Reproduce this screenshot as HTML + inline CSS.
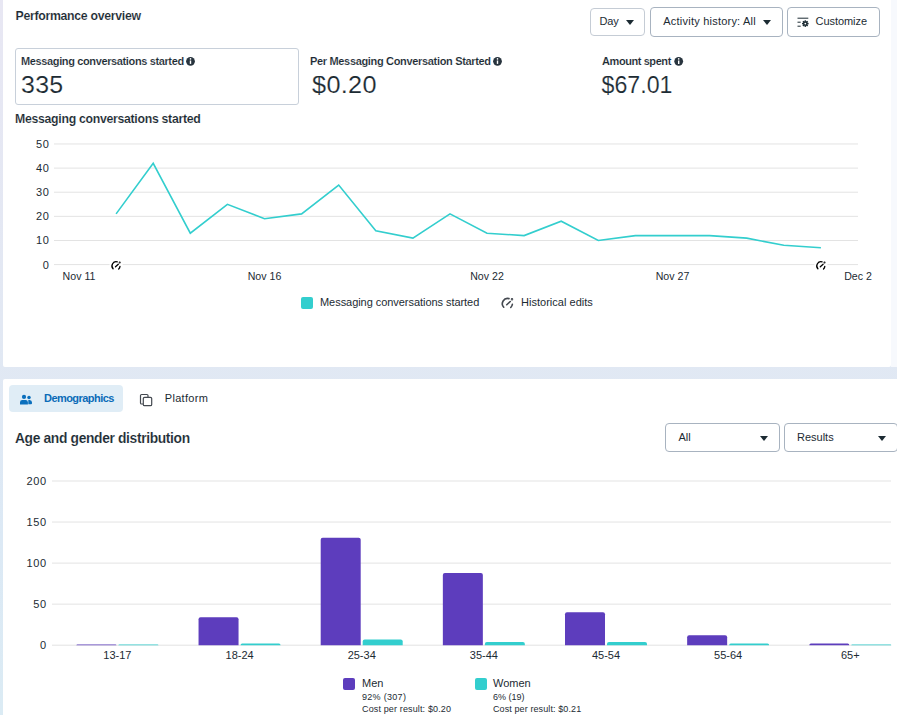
<!DOCTYPE html>
<html><head><meta charset="utf-8">
<style>
*{box-sizing:border-box;margin:0;padding:0}
html,body{width:897px;height:715px;overflow:hidden;background:linear-gradient(180deg,#e8e7f3 0%,#e2e8f3 45%,#dcE9f5 75%,#dbebf4 100%);font-family:"Liberation Sans",sans-serif;color:#1c2b33;position:relative}
.abs{position:absolute;white-space:nowrap}
#card1{position:absolute;left:3px;top:-10px;width:888px;height:377px;background:#fff;border-radius:0 0 2px 2px}
#rstrip{position:absolute;left:891px;top:0;width:6px;height:367px;background:#f7f9fd}
#card2{position:absolute;left:3px;top:379px;width:900px;height:400px;background:#fff;border-radius:2px 0 0 0}
.btn{position:absolute;border:1px solid #a8b3c0;border-radius:4px;background:#fff}
.tri{position:absolute;width:0;height:0;border-left:4.5px solid transparent;border-right:4.5px solid transparent;border-top:5px solid #1c2b33}
.lbl{font-size:11px;font-weight:bold;letter-spacing:-0.42px;-webkit-text-stroke:0.12px #fff}
.big{font-size:23.2px;letter-spacing:0.3px;color:#1c2b33;-webkit-text-stroke:0.15px #fff;transform-origin:0 0}
svg{position:absolute;left:0;top:0;z-index:5}
</style></head><body>
<div id="card1"></div>
<div id="rstrip"></div>
<div id="card2"></div>

<!-- header -->
<div class="abs" style="left:15.5px;top:8px;font-size:12.3px;font-weight:bold;letter-spacing:-0.3px;line-height:16px;-webkit-text-stroke:0.12px #fff">Performance overview</div>

<div class="btn" style="left:590px;top:8px;width:55px;height:28px;border-color:#c5ccd5"></div>
<div class="abs" style="left:599.5px;top:14px;font-size:11px;line-height:15px;letter-spacing:-0.1px">Day</div>
<div class="tri" style="left:626px;top:20px"></div>

<div class="btn" style="left:650px;top:7px;width:133px;height:30px"></div>
<div class="abs" style="left:663.3px;top:14px;font-size:11px;line-height:15px;letter-spacing:0.22px">Activity history: All</div>
<div class="tri" style="left:763px;top:20px"></div>

<div class="btn" style="left:787px;top:7px;width:93px;height:30px"></div>
<div class="abs" style="left:815.5px;top:14px;font-size:11px;line-height:15px;letter-spacing:-0.05px">Customize</div>

<!-- metric boxes -->
<div class="abs" style="left:15px;top:48px;width:284px;height:57px;border:1px solid #c8d0da;border-radius:3px"></div>
<div class="abs lbl" style="left:21px;top:54px;line-height:14px;letter-spacing:-0.37px">Messaging conversations started</div>
<div class="abs big" style="left:21px;top:72px;line-height:26px;transform:scaleX(1.075)">335</div>

<div class="abs lbl" style="left:310px;top:54px;line-height:14px;letter-spacing:-0.33px">Per Messaging Conversation Started</div>
<div class="abs big" style="left:311.5px;top:72px;line-height:26px;transform:scaleX(1.09)">$0.20</div>

<div class="abs lbl" style="left:602px;top:54px;line-height:14px">Amount spent</div>
<div class="abs big" style="left:601.5px;top:72px;line-height:26px;letter-spacing:0;transform:scaleX(1.0)">$67.01</div>

<div class="abs" style="left:15px;top:111px;font-size:12.3px;font-weight:bold;letter-spacing:-0.3px;line-height:16px;-webkit-text-stroke:0.12px #fff">Messaging conversations started</div>

<svg id="g" width="897" height="715" viewBox="0 0 897 715" font-family="Liberation Sans, sans-serif">
<line x1="54" y1="264.6" x2="858" y2="264.6" stroke="#e3e3e3" stroke-width="1"/>
<text x="49.6" y="268.6" text-anchor="end" font-size="11" fill="#1c2b33" letter-spacing="0.7">0</text>
<line x1="54" y1="240.47400000000002" x2="858" y2="240.47400000000002" stroke="#e3e3e3" stroke-width="1"/>
<text x="49.6" y="244.47400000000002" text-anchor="end" font-size="11" fill="#1c2b33" letter-spacing="0.7">10</text>
<line x1="54" y1="216.348" x2="858" y2="216.348" stroke="#e3e3e3" stroke-width="1"/>
<text x="49.6" y="220.348" text-anchor="end" font-size="11" fill="#1c2b33" letter-spacing="0.7">20</text>
<line x1="54" y1="192.22200000000004" x2="858" y2="192.22200000000004" stroke="#e3e3e3" stroke-width="1"/>
<text x="49.6" y="196.22200000000004" text-anchor="end" font-size="11" fill="#1c2b33" letter-spacing="0.7">30</text>
<line x1="54" y1="168.09600000000003" x2="858" y2="168.09600000000003" stroke="#e3e3e3" stroke-width="1"/>
<text x="49.6" y="172.09600000000003" text-anchor="end" font-size="11" fill="#1c2b33" letter-spacing="0.7">40</text>
<line x1="54" y1="143.97000000000003" x2="858" y2="143.97000000000003" stroke="#e3e3e3" stroke-width="1"/>
<text x="49.6" y="147.97000000000003" text-anchor="end" font-size="11" fill="#1c2b33" letter-spacing="0.7">50</text>
<text x="79.0" y="280" text-anchor="middle" font-size="10.6" fill="#1c2b33">Nov 11</text>
<text x="264.5" y="280" text-anchor="middle" font-size="10.6" fill="#1c2b33">Nov 16</text>
<text x="487.0" y="280" text-anchor="middle" font-size="10.6" fill="#1c2b33">Nov 22</text>
<text x="672.5" y="280" text-anchor="middle" font-size="10.6" fill="#1c2b33">Nov 27</text>
<text x="858.0" y="280" text-anchor="middle" font-size="10.6" fill="#1c2b33">Dec 2</text>
<polyline points="116.1,213.9 153.2,163.3 190.3,233.2 227.4,204.3 264.5,218.8 301.6,213.9 338.7,185.0 375.8,230.8 412.9,238.1 450.0,213.9 487.0,233.2 524.1,235.6 561.2,221.2 598.3,240.5 635.4,235.6 672.5,235.6 709.6,235.6 746.7,238.1 783.8,245.3 820.9,247.7" fill="none" stroke="#33cece" stroke-width="1.6" stroke-linejoin="miter"/>
<rect x="109.5952380952381" y="259" width="13" height="12" fill="#fff"/>
<g transform="translate(116.0952380952381,265.8) scale(1.0)" fill="none" stroke="#000" stroke-width="1.3" stroke-linecap="round"><path d="M-3,3 A4.2,4.2 0 0 1 1.2,-3.9"/><path d="M3.9,0.6 A4.2,4.2 0 0 1 2.6,3.2"/><path d="M-0.6,1 L2.2,-1.6"/><circle cx="3.6" cy="-3.4" r="0.35" fill="#000"/></g>
<rect x="814.4047619047619" y="259" width="13" height="12" fill="#fff"/>
<g transform="translate(820.9047619047619,265.8) scale(1.0)" fill="none" stroke="#000" stroke-width="1.3" stroke-linecap="round"><path d="M-3,3 A4.2,4.2 0 0 1 1.2,-3.9"/><path d="M3.9,0.6 A4.2,4.2 0 0 1 2.6,3.2"/><path d="M-0.6,1 L2.2,-1.6"/><circle cx="3.6" cy="-3.4" r="0.35" fill="#000"/></g>
<rect x="301" y="297" width="12" height="12" rx="2" fill="#33cece"/>
<text x="320" y="305.8" font-size="11" fill="#1c2b33" letter-spacing="-0.05">Messaging conversations started</text>
<g transform="translate(507.5,303.5) scale(1.25)" fill="none" stroke="#444950" stroke-width="1.3" stroke-linecap="round"><path d="M-3,3 A4.2,4.2 0 0 1 1.2,-3.9"/><path d="M3.9,0.6 A4.2,4.2 0 0 1 2.6,3.2"/><path d="M-0.6,1 L2.2,-1.6"/><circle cx="3.6" cy="-3.4" r="0.35" fill="#444950"/></g>
<text x="521" y="305.8" font-size="11" fill="#1c2b33" letter-spacing="0.02">Historical edits</text>
<line x1="52" y1="645.2" x2="891" y2="645.2" stroke="#e3e3e3" stroke-width="1"/>
<text x="46.6" y="649.0" text-anchor="end" font-size="11" fill="#1c2b33" letter-spacing="0.55">0</text>
<line x1="52" y1="604.1500000000001" x2="891" y2="604.1500000000001" stroke="#e3e3e3" stroke-width="1"/>
<text x="46.6" y="607.95" text-anchor="end" font-size="11" fill="#1c2b33" letter-spacing="0.55">50</text>
<line x1="52" y1="563.1" x2="891" y2="563.1" stroke="#e3e3e3" stroke-width="1"/>
<text x="46.6" y="566.9" text-anchor="end" font-size="11" fill="#1c2b33" letter-spacing="0.55">100</text>
<line x1="52" y1="522.0500000000001" x2="891" y2="522.0500000000001" stroke="#e3e3e3" stroke-width="1"/>
<text x="46.6" y="525.85" text-anchor="end" font-size="11" fill="#1c2b33" letter-spacing="0.55">150</text>
<line x1="52" y1="481.00000000000006" x2="891" y2="481.00000000000006" stroke="#e3e3e3" stroke-width="1"/>
<text x="46.6" y="484.80000000000007" text-anchor="end" font-size="11" fill="#1c2b33" letter-spacing="0.55">200</text>
<path d="M76.4,645.2 L76.4,645.20 Q76.4,644.38 77.22,644.38 L115.58,644.38 Q116.4,644.38 116.4,645.20 L116.4,645.2 Z" fill="#5d3dbd"/>
<path d="M118.4,645.2 L118.4,645.20 Q118.4,644.40 119.20,644.40 L157.60,644.40 Q158.4,644.40 158.4,645.20 L158.4,645.2 Z" fill="#33cece"/>
<text x="117.4" y="659" text-anchor="middle" font-size="11" fill="#1c2b33">13-17</text>
<path d="M198.55,645.2 L198.55,619.29 Q198.55,617.29 200.55,617.29 L236.55,617.29 Q238.55,617.29 238.55,619.29 L238.55,645.2 Z" fill="#5d3dbd"/>
<path d="M240.55,645.2 L240.55,645.20 Q240.55,643.56 242.19,643.56 L278.91,643.56 Q280.55,643.56 280.55,645.20 L280.55,645.2 Z" fill="#33cece"/>
<text x="239.6" y="659" text-anchor="middle" font-size="11" fill="#1c2b33">18-24</text>
<path d="M320.70000000000005,645.2 L320.70000000000005,539.65 Q320.70000000000005,537.65 322.70,537.65 L358.70,537.65 Q360.70000000000005,537.65 360.70000000000005,539.65 L360.70000000000005,645.2 Z" fill="#5d3dbd"/>
<path d="M362.70000000000005,645.2 L362.70000000000005,641.45 Q362.70000000000005,639.45 364.70,639.45 L400.70,639.45 Q402.70000000000005,639.45 402.70000000000005,641.45 L402.70000000000005,645.2 Z" fill="#33cece"/>
<text x="361.7" y="659" text-anchor="middle" font-size="11" fill="#1c2b33">25-34</text>
<path d="M442.85,645.2 L442.85,574.95 Q442.85,572.95 444.85,572.95 L480.85,572.95 Q482.85,572.95 482.85,574.95 L482.85,645.2 Z" fill="#5d3dbd"/>
<path d="M484.85,645.2 L484.85,643.92 Q484.85,641.92 486.85,641.92 L522.85,641.92 Q524.85,641.92 524.85,643.92 L524.85,645.2 Z" fill="#33cece"/>
<text x="483.9" y="659" text-anchor="middle" font-size="11" fill="#1c2b33">35-44</text>
<path d="M565.0,645.2 L565.0,614.36 Q565.0,612.36 567.00,612.36 L603.00,612.36 Q605.0,612.36 605.0,614.36 L605.0,645.2 Z" fill="#5d3dbd"/>
<path d="M607.0,645.2 L607.0,643.92 Q607.0,641.92 609.00,641.92 L645.00,641.92 Q647.0,641.92 647.0,643.92 L647.0,645.2 Z" fill="#33cece"/>
<text x="606.0" y="659" text-anchor="middle" font-size="11" fill="#1c2b33">45-54</text>
<path d="M687.15,645.2 L687.15,637.35 Q687.15,635.35 689.15,635.35 L725.15,635.35 Q727.15,635.35 727.15,637.35 L727.15,645.2 Z" fill="#5d3dbd"/>
<path d="M729.15,645.2 L729.15,645.20 Q729.15,643.56 730.79,643.56 L767.51,643.56 Q769.15,643.56 769.15,645.20 L769.15,645.2 Z" fill="#33cece"/>
<text x="728.1" y="659" text-anchor="middle" font-size="11" fill="#1c2b33">55-64</text>
<path d="M809.3000000000001,645.2 L809.3000000000001,645.20 Q809.3000000000001,643.56 810.94,643.56 L847.66,643.56 Q849.3000000000001,643.56 849.3000000000001,645.20 L849.3000000000001,645.2 Z" fill="#5d3dbd"/>
<path d="M851.3000000000001,645.2 L851.3000000000001,645.20 Q851.3000000000001,644.40 852.10,644.40 L890.50,644.40 Q891.3000000000001,644.40 891.3000000000001,645.20 L891.3000000000001,645.2 Z" fill="#33cece"/>
<text x="850.3" y="659" text-anchor="middle" font-size="11" fill="#1c2b33">65+</text>
<rect x="343" y="678" width="12" height="12" rx="2" fill="#5d3dbd"/>
<text x="362" y="687" font-size="11" fill="#1c2b33">Men</text>
<text x="362" y="700" font-size="9" fill="#1c2b33" letter-spacing="0.3">92% (307)</text>
<text x="362" y="711.5" font-size="9" fill="#1c2b33" letter-spacing="0.14">Cost per result: $0.20</text>
<rect x="475" y="678" width="12" height="12" rx="2" fill="#33cece"/>
<text x="493" y="687" font-size="11" fill="#1c2b33">Women</text>
<text x="493" y="700" font-size="9" fill="#1c2b33">6% (19)</text>
<text x="493" y="711.5" font-size="9" fill="#1c2b33" letter-spacing="0.1">Cost per result: $0.21</text>
<circle cx="190.5" cy="61.3" r="4.4" fill="#28343e"/>
<path d="M189.8,60.5 L191.2,60.5 L191.2,63.9 L189.8,63.9 Z" fill="#fff"/><circle cx="190.5" cy="58.9" r="0.8" fill="#fff"/>
<circle cx="497.5" cy="61.3" r="4.4" fill="#28343e"/>
<path d="M496.8,60.5 L498.2,60.5 L498.2,63.9 L496.8,63.9 Z" fill="#fff"/><circle cx="497.5" cy="58.9" r="0.8" fill="#fff"/>
<circle cx="678.7" cy="61.3" r="4.4" fill="#28343e"/>
<path d="M678.0,60.5 L679.4000000000001,60.5 L679.4000000000001,63.9 L678.0,63.9 Z" fill="#fff"/><circle cx="678.7" cy="58.9" r="0.8" fill="#fff"/>
<g stroke="#1c2b33" stroke-width="1" fill="none"><line x1="797.5" y1="18.2" x2="808.3" y2="18.2"/><line x1="797.5" y1="22.2" x2="800.7" y2="22.2"/><line x1="797.5" y1="26.2" x2="800.7" y2="26.2"/></g><g transform="translate(805.3,23.6)" fill="#1c2b33"><circle r="2.4"/><rect x="-0.75" y="-3.3" width="1.5" height="1.6" transform="rotate(0)"/><rect x="-0.75" y="-3.3" width="1.5" height="1.6" transform="rotate(45)"/><rect x="-0.75" y="-3.3" width="1.5" height="1.6" transform="rotate(90)"/><rect x="-0.75" y="-3.3" width="1.5" height="1.6" transform="rotate(135)"/><rect x="-0.75" y="-3.3" width="1.5" height="1.6" transform="rotate(180)"/><rect x="-0.75" y="-3.3" width="1.5" height="1.6" transform="rotate(225)"/><rect x="-0.75" y="-3.3" width="1.5" height="1.6" transform="rotate(270)"/><rect x="-0.75" y="-3.3" width="1.5" height="1.6" transform="rotate(315)"/></g><circle cx="805.3" cy="23.6" r="0.9" fill="#fff"/>
<g fill="#0b6fbd"><circle cx="24" cy="396.9" r="2.1"/><path d="M20,404.5 L20,402.2 Q20,399.9 22.3,399.9 L25.6,399.9 Q27.9,399.9 27.9,402.2 L27.9,404.5 Z"/><circle cx="29" cy="397.4" r="1.75"/><path d="M28.3,404.2 L28.3,400 L29.6,400 Q32,400.3 32,402.6 L32,403.2 Q32,404.2 31,404.2 Z"/></g>
<g fill="none" stroke="#444950" stroke-width="1.2"><path d="M143,404 L141.6,404 Q140.5,404 140.5,402.9 L140.5,395.6 Q140.5,394.5 141.6,394.5 L146.9,394.5 Q148,394.5 148,395.6 L148,397"/><rect x="143.3" y="397.3" width="8.4" height="8.4" rx="1.3"/></g>
</svg>

<!-- tabs -->
<div class="abs" style="left:9px;top:385px;width:114px;height:27px;background:#e0edf6;border-radius:4px"></div>
<div class="abs" style="left:44px;top:391px;font-size:11px;font-weight:bold;color:#0b6bb8;line-height:15px;letter-spacing:-0.55px">Demographics</div>
<div class="abs" style="left:164.8px;top:391px;font-size:11px;line-height:15px;letter-spacing:0.3px">Platform</div>

<div class="abs" style="left:15px;top:430px;font-size:13.8px;font-weight:bold;letter-spacing:-0.34px;line-height:17px;-webkit-text-stroke:0.12px #fff">Age and gender distribution</div>

<div class="btn" style="left:665px;top:423px;width:115px;height:29px"></div>
<div class="abs" style="left:678.5px;top:430px;font-size:11px;line-height:15px">All</div>
<div class="tri" style="left:760px;top:436px"></div>
<div class="btn" style="left:784px;top:423px;width:114px;height:29px"></div>
<div class="abs" style="left:797px;top:430px;font-size:11px;line-height:15px">Results</div>
<div class="tri" style="left:878px;top:436px"></div>

</body></html>
